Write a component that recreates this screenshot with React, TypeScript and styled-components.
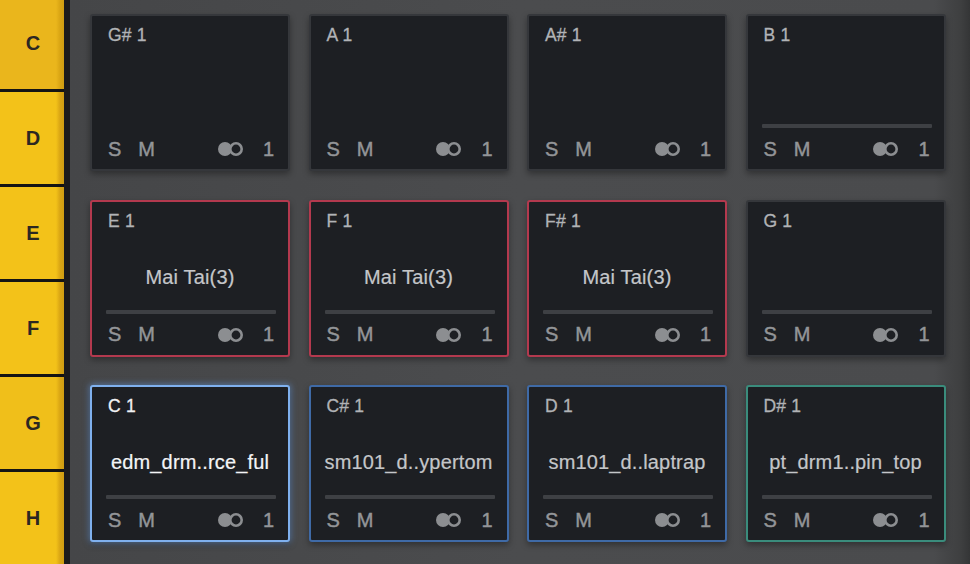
import React from "react";
import styled, { createGlobalStyle, css } from "styled-components";

const Global = createGlobalStyle`
  html, body { margin: 0; padding: 0; background: #47484a; }
  body { width: 970px; height: 564px; overflow: hidden; font-family: "Liberation Sans", Arial, sans-serif; }
`;

const Screen = styled.div`
  display: flex;
  width: 970px;
  height: 564px;
  overflow: hidden;
`;

const KeyStrip = styled.div`
  width: 64px;
  flex: none;
  display: flex;
  flex-direction: column;
  gap: 3px;
  margin-top: -3px;
  background: #141414;
  border-right: 6px solid #1b1b1c;
`;

const Key = styled.div<{ $tone: string }>`
  height: 92px;
  flex: none;
  display: flex;
  align-items: center;
  justify-content: center;
  padding-left: 2px;
  background: linear-gradient(90deg, ${(p) => p.$tone} 0, ${(p) => p.$tone} 56px, #d9a514 60px, #cf9d12 64px);
  color: #2b2722;
  font-weight: bold;
  font-size: 20px;
`;

const Stage = styled.div`
  flex: 1;
  background: linear-gradient(90deg, #454648 0%, #4b4c4e 50%, #4a4b4d 96%, #3e3f40 99%, #343536 100%);
  padding: 14px 0 0 20px;
`;

const Grid = styled.div`
  display: grid;
  grid-template-columns: repeat(4, 200px);
  grid-auto-rows: 157px;
  column-gap: 18.5px;
  row-gap: 28.5px;
`;

type Tone = "plain" | "red" | "blue" | "active" | "teal";

const borderFor: Record<Tone, string> = {
  plain: "#35373b",
  red: "#b3394e",
  blue: "#3f6aa6",
  active: "#7fb0ee",
  teal: "#3a8c7c",
};

const Pad = styled.div<{ $tone: Tone }>`
  box-sizing: border-box;
  border: 2px solid ${(p) => borderFor[p.$tone]};
  border-radius: 3px;
  background: #1d1f23;
  padding: 9px 14px 10px 16px;
  display: flex;
  flex-direction: column;
  box-shadow: 0 3px 6px rgba(0, 0, 0, 0.35);
  ${(p) =>
    p.$tone === "active" &&
    css`
      box-shadow: 0 0 6px 1px rgba(110, 160, 230, 0.55), 0 3px 6px rgba(0, 0, 0, 0.35);
    `}
`;

const Label = styled.div<{ $bright?: boolean }>`
  height: 20px;
  line-height: 20px;
  font-size: 17.5px;
  letter-spacing: 0.2px;
  -webkit-text-stroke: 0.3px currentColor;
  color: ${(p) => (p.$bright ? "#f0f1f3" : "#b1b3b6")};
`;

const Name = styled.div<{ $bright?: boolean }>`
  flex: 1;
  padding-top: 14px;
  margin-left: -2px;
  display: flex;
  align-items: center;
  justify-content: center;
  font-size: 20px;
  letter-spacing: 0.15px;
  white-space: nowrap;
  -webkit-text-stroke: 0.2px currentColor;
  color: ${(p) => (p.$bright ? "#f4f5f7" : "#c4c6c9")};
`;

const Bar = styled.div<{ $show: boolean }>`
  height: 4px;
  margin: 0 0 11px -2px;
  width: 170px;
  background: ${(p) => (p.$show ? "#3e4044" : "transparent")};
  border-radius: 1px;
`;

const Footer = styled.div`
  height: 20px;
  display: flex;
  align-items: center;
  font-size: 20px;
  color: #939598;
  -webkit-text-stroke: 0.45px currentColor;
`;

const Flag = styled.span`
  margin-right: 17px;
`;

const Voices = styled.span`
  margin-left: auto;
  display: flex;
  align-items: center;
  gap: 18px;
`;

const LinkIcon = () => (
  <svg width="28" height="16" viewBox="0 0 28 16">
    <circle cx="8" cy="8" r="7" fill="#8c8e91" />
    <circle cx="19" cy="8" r="5.7" fill="#1d1f23" stroke="#8c8e91" strokeWidth="2.6" />
  </svg>
);

type PadData = { note: string; tone: Tone; name?: string; bar?: boolean };

const pads: PadData[] = [
  { note: "G# 1", tone: "plain" },
  { note: "A 1", tone: "plain" },
  { note: "A# 1", tone: "plain" },
  { note: "B 1", tone: "plain", bar: true },
  { note: "E 1", tone: "red", name: "Mai Tai(3)", bar: true },
  { note: "F 1", tone: "red", name: "Mai Tai(3)", bar: true },
  { note: "F# 1", tone: "red", name: "Mai Tai(3)", bar: true },
  { note: "G 1", tone: "plain", bar: true },
  { note: "C 1", tone: "active", name: "edm_drm..rce_ful", bar: true },
  { note: "C# 1", tone: "blue", name: "sm101_d..ypertom", bar: true },
  { note: "D 1", tone: "blue", name: "sm101_d..laptrap", bar: true },
  { note: "D# 1", tone: "teal", name: "pt_drm1..pin_top", bar: true },
];

const keys = [
  { k: "C", c: "#eab61c" },
  { k: "D", c: "#f3c219" },
  { k: "E", c: "#f3c219" },
  { k: "F", c: "#f3c219" },
  { k: "G", c: "#f0bf1a" },
  { k: "H", c: "#f3c219" },
];

export default function App() {
  return (
    <>
      <Global />
      <Screen>
        <KeyStrip>
          {keys.map((k) => (
            <Key key={k.k} $tone={k.c}>
              {k.k}
            </Key>
          ))}
        </KeyStrip>
        <Stage>
          <Grid>
            {pads.map((p) => (
              <Pad key={p.note} $tone={p.tone}>
                <Label $bright={p.tone === "active"}>{p.note}</Label>
                <Name $bright={p.tone === "active"}>{p.name ?? ""}</Name>
                <Bar $show={!!p.bar} />
                <Footer>
                  <Flag>S</Flag>
                  <Flag>M</Flag>
                  <Voices>
                    <LinkIcon />
                    <span>1</span>
                  </Voices>
                </Footer>
              </Pad>
            ))}
          </Grid>
        </Stage>
      </Screen>
    </>
  );
}
